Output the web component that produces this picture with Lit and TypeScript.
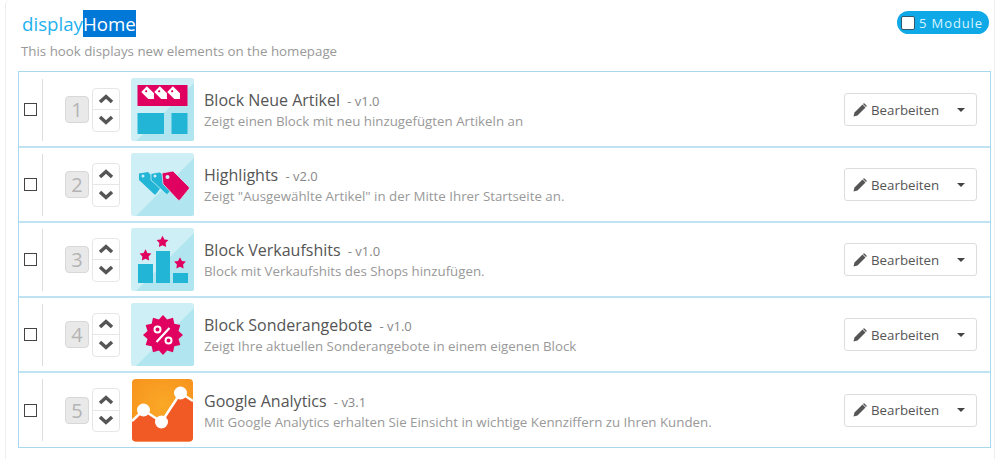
import { LitElement, html, css, svg } from "lit";
import { customElement } from "lit/decorators.js";

const bg = svg`<rect width="63" height="63" rx="2.5" fill="#cdeff5"/><path d="M63 5V60.500A2.500 2.500 0 0 1 60.500 63H5Z" fill="#b1e6f0"/>`;
const blue = "#22b5d6";
const pink = "#e0005f";
const star = (x: number, y: number, r: number) => {
  const p: string[] = [];
  for (let i = 0; i < 10; i++) {
    const a = (-90 + i * 36) * Math.PI / 180;
    const q = i % 2 ? r * 0.52 : r;
    p.push(`${(x + q * Math.cos(a)).toFixed(1)},${(y + q * Math.sin(a)).toFixed(1)}`);
  }
  return svg`<polygon points=${p.join(" ")} fill=${pink}/>`;
};
const burst = () => {
  const p: string[] = [];
  for (let i = 0; i < 24; i++) {
    const a = (-90 + i * 15) * Math.PI / 180;
    const q = i % 2 ? 16 : 20;
    p.push(`${(32 + q * Math.cos(a)).toFixed(1)},${(32 + q * Math.sin(a)).toFixed(1)}`);
  }
  return svg`<polygon points=${p.join(" ")} fill=${pink}/>`;
};
const miniTag = (x: number, y: number) => svg`<g transform="translate(${x} ${y}) rotate(45)"><path d="M-7 -4H3L7 0L3 4H-7Z" fill="#fff"/><circle cx="-4" cy="0" r="1.100" fill=${pink}/></g>`;

const thumbs = [
  svg`${bg}<rect x="6.500" y="7" width="50" height="21" fill=${pink}/>${miniTag(18, 16)}${miniTag(31, 16)}${miniTag(44, 16)}<rect x="6.500" y="35" width="26.500" height="21" fill=${blue}/><rect x="40.500" y="35" width="16" height="21" fill=${blue}/>`,
  svg`${bg}<path d="M8 20.500L17 19L31 33L25 41Q24 42 23 41L8 27Z" fill=${blue}/><circle cx="12" cy="23" r="1.500" fill="#cdeff5"/><path d="M20 20.500L29 19L43 33L37 41Q36 42 35 41L20 27Z" fill=${blue} stroke="#cdeff5" stroke-width="0.800"/><circle cx="24" cy="23" r="1.500" fill="#cdeff5"/><path d="M31 20L42 18L58 34Q59 35 58 36L49 47Q48 48 47 47L32 31Z" fill=${pink} stroke="#cdeff5" stroke-width="0.800"/><circle cx="36.500" cy="24" r="2" fill="#cdeff5"/>`,
  svg`${bg}<rect x="7" y="36" width="15" height="19" fill=${blue}/><rect x="25" y="23" width="14" height="32" fill=${blue}/><rect x="42" y="45" width="15" height="10" fill=${blue}/>${star(14.500, 27.500, 6.200)}${star(31.500, 14, 6.200)}${star(49, 35.500, 6.200)}`,
  svg`${bg}${burst()}<line x1="38.500" y1="25" x2="25.500" y2="39" stroke="#fff" stroke-width="2.200"/><circle cx="26.500" cy="26.500" r="3" fill="none" stroke="#fff" stroke-width="2"/><circle cx="37.500" cy="37.500" r="3" fill="none" stroke="#fff" stroke-width="2"/>`,
  svg`<defs><radialGradient id="ga" cx="0.500" cy="0.400" r="0.600"><stop offset="0" stop-color="#faa826"/><stop offset="1" stop-color="#f7941e"/></radialGradient></defs><rect x="1" width="61" height="62.500" rx="4" fill="url(#ga)"/><path d="M1 42L12.500 31L30.500 43L49.500 14L62 22V58.500A4 4 0 0 1 58 62.500H5A4 4 0 0 1 1 58.500Z" fill="#f15a24"/><polyline points="1,42 12.500,31 30.500,43 49.500,14 62,22" fill="none" stroke="#fff" stroke-width="2.500"/><circle cx="12.500" cy="31" r="6.500" fill="#fff"/><circle cx="30.500" cy="43" r="6.500" fill="#fff"/><circle cx="49.500" cy="14" r="6.500" fill="#fff"/>`,
];

const modules = [
  { title: "Block Neue Artikel", version: "v1.0", desc: "Zeigt einen Block mit neu hinzugefügten Artikeln an" },
  { title: "Highlights", version: "v2.0", desc: "Zeigt \"Ausgewählte Artikel\" in der Mitte Ihrer Startseite an." },
  { title: "Block Verkaufshits", version: "v1.0", desc: "Block mit Verkaufshits des Shops hinzufügen." },
  { title: "Block Sonderangebote", version: "v1.0", desc: "Zeigt Ihre aktuellen Sonderangebote in einem eigenen Block" },
  { title: "Google Analytics", version: "v3.1", desc: "Mit Google Analytics erhalten Sie Einsicht in wichtige Kennziffern zu Ihren Kunden." },
];

@customElement("app-root")
export class AppRoot extends LitElement {
  static styles = css`
    :host { display: block; width: 1000px; height: 459px; overflow: hidden; background: #fff; font-family: "Open Sans", sans-serif; }
    .panel { box-sizing: border-box; margin: 0 5px; height: 470px; padding: 10px 5px 0 12px; border: 1px solid #eee; border-bottom: 0; border-top: 0; border-top-left-radius: 5px; }
    .head { display: flex; justify-content: space-between; align-items: flex-start; height: 31px; }
    .hook { margin: 0 0 0 4px; font-size: 18.700px; font-weight: 400; line-height: 27px; color: #1fb1ee; }
    .sel { display: inline-block; background: #0078d7; color: #fff; }
    .count { display: flex; align-items: center; gap: 4px; height: 23px; margin: 1px 0 0; padding: 0 6px 0 4px; border-radius: 12px; background: #0ea9e6; color: #d8f4ff; font-size: 13px; letter-spacing: 0.9px; box-sizing: border-box; }
    .count .box { width: 14px; height: 14px; background: #fff; border: 1.500px solid #34566a; border-radius: 2px; box-sizing: border-box; }
    .hint { margin: 0 0 10px 3px; font-size: 13.300px; line-height: 20px; height: 20px; color: #999; }
    .list { border: 1px solid #a8d8ee; width: 973px; box-sizing: border-box; padding-top: 1px; }
    .row { display: flex; align-items: center; height: 73px; padding-left: 5px; border-bottom: 2px solid #bfe3f3; box-sizing: content-box; }
    .row:last-child { border-bottom: 0; height: 74px; }
    .check { flex: none; width: 13px; height: 13px; border: 1px solid #444; box-sizing: border-box; background: #fff; }
    .divider { flex: none; width: 1px; height: 62px; margin: 0 22px 0 5px; background: #ddd; }
    .pos { flex: none; width: 24px; height: 27px; box-sizing: border-box; border: 1px solid #d8d8d8; border-radius: 4px; background: #e9e9e9; color: #b4b4b4; font-size: 20px; line-height: 25px; text-align: center; margin-right: 3px; }
    .updown { flex: none; width: 28px; height: 44px; box-sizing: border-box; border: 1px solid #e6e6e6; border-radius: 4px; display: flex; flex-direction: column; margin-right: 11px; }
    .updown div { flex: 1; display: flex; align-items: center; justify-content: center; }
    .updown div + div { border-top: 1px solid #e6e6e6; }
    .updown svg { display: block; }
    .thumb { flex: none; display: block; margin-right: 10px; }
    .info { flex: 1; min-width: 0; }
    .title { font-size: 16px; line-height: 21px; color: #555; margin-top: 1px; }
    .ver { font-size: 13px; color: #888; margin-left: 3px; }
    .desc { font-size: 13.300px; line-height: 18px; color: #999; }
    .btn { flex: none; display: flex; align-items: center; width: 133px; height: 33px; box-sizing: border-box; margin-right: 13px; padding: 0 8px; border: 1px solid #ddd; border-radius: 3px; background: #fff; color: #555; font-size: 13.300px; }
    .btn svg { margin-right: 4px; flex: none; }
    .caret { width: 0; height: 0; margin-left: auto; margin-right: 3px; border-left: 4px solid transparent; border-right: 4px solid transparent; border-top: 4px solid #444; }
  `;

  render() {
    return html`<div class="panel">
      <div class="head">
        <h3 class="hook">display<span class="sel">Home</span></h3>
        <div class="count"><span class="box"></span>5 Module</div>
      </div>
      <p class="hint">This hook displays new elements on the homepage</p>
      <div class="list">
        ${modules.map((m, i) => html`<div class="row">
          <span class="check"></span>
          <span class="divider"></span>
          <span class="pos">${i + 1}</span>
          <div class="updown">
            <div><svg width="16" height="11" viewBox="0 0 16 11"><polyline points="2,9 8,3.500 14,9" fill="none" stroke="#555" stroke-width="3.500"/></svg></div>
            <div><svg width="16" height="11" viewBox="0 0 16 11"><polyline points="2,2 8,7.500 14,2" fill="none" stroke="#555" stroke-width="3.500"/></svg></div>
          </div>
          <svg class="thumb" width="63" height="63" viewBox="0 0 63 63">${thumbs[i]}</svg>
          <div class="info">
            <div class="title">${m.title} <span class="ver">- ${m.version}</span></div>
            <div class="desc">${m.desc}</div>
          </div>
          <div class="btn">
            <svg width="14" height="14" viewBox="0 0 14 14"><path d="M0.500 13.500L1.500 9.500L9.500 1.500L12.500 4.500L4.500 12.500Z" fill="#555"/><path d="M10.500 0.500Q11 0 11.500 0.500L13.500 2.500Q14 3 13.500 3.500L13 4L10 1Z" fill="#555"/></svg>
            Bearbeiten
            <span class="caret"></span>
          </div>
        </div>`)}
      </div>
    </div>`;
  }
}
